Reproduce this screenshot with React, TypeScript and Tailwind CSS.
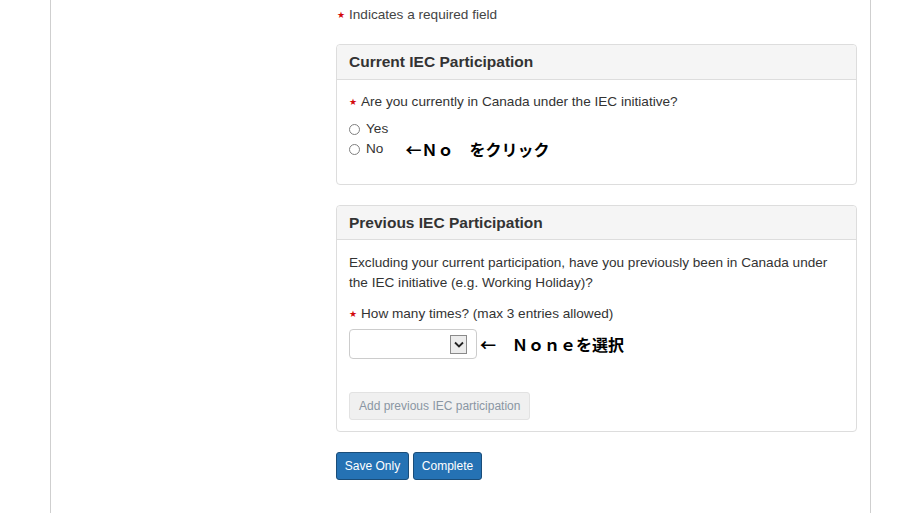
import React from "react";

const Star = () => (
  <span className="text-[9px] leading-[0] text-[#d3080c] mr-[4px] relative top-[-1px]">★</span>
);

const Radio = ({ label }: { label: string }) => (
  <div className="flex items-center h-[20px]">
    <span className="w-[11px] h-[11px] rounded-full border border-[#808080] bg-white mr-[6px]" />
    <span>{label}</span>
  </div>
);

const jp = { fontFamily: '"Noto Sans CJK JP", sans-serif' };

export default function App() {
  return (
    <div
      className="w-[900px] h-[513px] bg-white overflow-hidden text-[13.6px] leading-[20px] text-[#333]"
      style={{ fontFamily: '"Liberation Sans", Arial, sans-serif' }}
    >
      <div className="ml-[50px] w-[821px] h-full border-l border-r border-[#cfcfcf] pl-[285px] pr-[13px]">
        <div className="pt-[5px] ml-[1px] h-[25px] text-[#444]">
          <Star />
          Indicates a required field
        </div>

        <div className="mt-[19px] border border-[#ddd] rounded-[4px]">
          <div className="h-[35px] bg-[#f5f5f5] border-b border-[#ddd] rounded-t-[4px] px-[12px] flex items-center font-bold text-[15.5px] text-[#333]">
            Current IEC Participation
          </div>
          <div className="px-[12px] pt-[12px] pb-[25px]">
            <div className="h-[20px]">
              <Star />
              Are you currently in Canada under the IEC initiative?
            </div>
            <div className="mt-[7px]">
              <Radio label="Yes" />
              <div className="flex items-center h-[20px]">
                <Radio label="No" />
                <span className="ml-[22px] font-bold text-[16px] leading-[20px] text-black" style={jp}>
                  ←Ｎｏ　をクリック
                </span>
              </div>
            </div>
          </div>
        </div>

        <div className="mt-[20px] border border-[#ddd] rounded-[4px]">
          <div className="h-[34px] bg-[#f5f5f5] border-b border-[#ddd] rounded-t-[4px] px-[12px] flex items-center font-bold text-[15.5px] text-[#333]">
            Previous IEC Participation
          </div>
          <div className="px-[12px] pt-[13px] pb-[11px]">
            <p>
              Excluding your current participation, have you previously been in Canada under the IEC initiative (e.g. Working Holiday)?
            </p>
            <div className="mt-[11px] h-[20px]">
              <Star />
              How many times? (max 3 entries allowed)
            </div>
            <div className="mt-[5px] flex items-center h-[30px]">
              <div className="w-[128px] h-[30px] border border-[#ccc] rounded-[4px] bg-white flex items-center justify-end pr-[9px]">
                <div className="w-[17px] h-[19px] border border-[#8a8a8a] bg-[#ececec] flex items-center justify-center">
                  <svg width="10" height="7" viewBox="0 0 10 7">
                    <path d="M1 1.5 L5 5.5 L9 1.5" fill="none" stroke="#222" strokeWidth="1.8" />
                  </svg>
                </div>
              </div>
              <span className="ml-[3px] font-bold text-[16px] leading-[20px] text-black" style={jp}>
                ←　Ｎｏｎｅを選択
              </span>
            </div>
            <button className="mt-[33px] h-[28px] px-[9px] bg-[#f0f0f0] border border-[#e2e2e2] rounded-[3px] text-[12px] leading-[20px] text-[#8a96a3]">
              Add previous IEC participation
            </button>
          </div>
        </div>

        <div className="mt-[20px] flex gap-[4px]">
          <button className="h-[28px] w-[73px] bg-[#2572b4] border border-[#1a4d79] rounded-[3px] text-white text-[12px] leading-[20px]">
            Save Only
          </button>
          <button className="h-[28px] w-[69px] bg-[#2572b4] border border-[#1a4d79] rounded-[3px] text-white text-[12px] leading-[20px]">
            Complete
          </button>
        </div>
      </div>
    </div>
  );
}
